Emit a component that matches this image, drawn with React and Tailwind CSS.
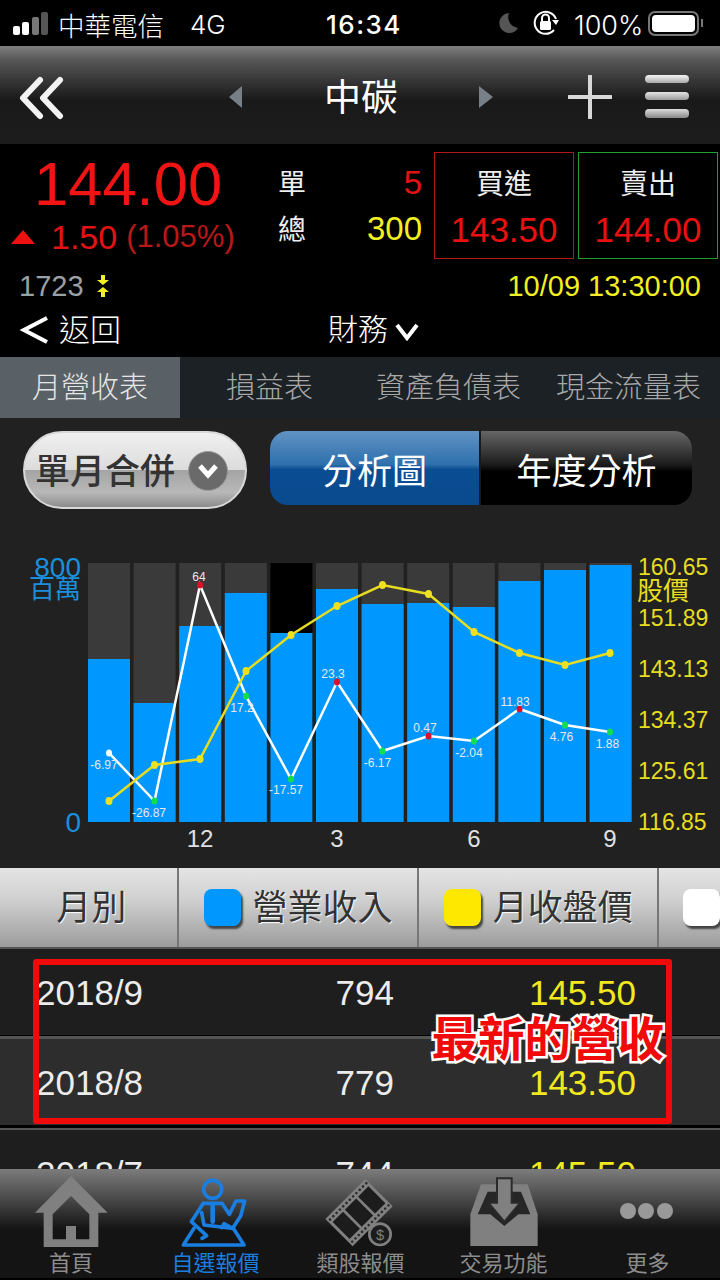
import React from 'react';

const barTops = [659, 703, 626, 593, 633, 589, 604, 603, 607, 581, 570, 565];
const pointX = [109, 154.5, 200, 246, 291, 337, 382.5, 428.5, 474, 519.5, 565, 610];
const priceY = [801, 765, 759, 671, 635, 606, 585, 594, 632, 653, 665, 653];
const growthY = [753, 801, 585, 696, 779, 682, 751, 736, 741, 709, 725, 732];
const growthDot = ['#ffffff', '#11e04a', '#e0102a', '#11e04a', '#11e04a', '#e0102a', '#11e04a', '#e0102a', '#11e04a', '#e0102a', '#11e04a', '#11e04a'];
const growthLabels = [
  ['-6.97', 104, 769], ['-26.87', 149, 817], ['64', 199, 581], ['17.2', 242, 712],
  ['-17.57', 286, 794], ['23.3', 333, 678], ['-6.17', 377.5, 767], ['0.47', 425, 732],
  ['-2.04', 469, 757], ['11.83', 515, 706], ['4.76', 561.5, 741], ['1.88', 607.5, 748],
];
const rightAxis = [['160.65', 575], ['151.89', 626], ['143.13', 677], ['134.37', 728], ['125.61', 779], ['116.85', 830]];

const line = (ys) => pointX.map((x, i) => `${x},${ys[i]}`).join(' ');

const StatusBar = () => (
  <div className="h-[46px] bg-black flex items-center text-white text-[26px] leading-none font-['Inter','Noto_Sans_CJK_TC',sans-serif]">
    <svg width="36" height="24" viewBox="0 0 36 24" className="ml-[13px] mt-[2px]">
      <rect x="0" y="14" width="7" height="9" rx="2" fill="#fff" />
      <rect x="9" y="10" width="7" height="13" rx="2" fill="#fff" />
      <rect x="19" y="5" width="7" height="18" rx="2" fill="#777" />
      <rect x="28" y="0" width="7" height="23" rx="2" fill="#555" />
    </svg>
    <span className="ml-[9px] mt-[4px] w-[132px] text-[26.5px] font-['Noto_Sans_CJK_TC',sans-serif] font-light">中華電信</span>
    <span className="w-[136px] mt-[4px] text-[26px] font-light">4G</span>
    <span className="w-[170px] mt-[4px] font-medium tracking-[1.5px]">16:34</span>
    <svg width="24" height="24" viewBox="0 0 24 24">
      <path d="M13 2 A10 10 0 1 0 22 17 A11 11 0 0 1 13 2 Z" fill="#555" />
    </svg>
    <svg width="28" height="28" viewBox="0 0 28 28" className="ml-[12px]">
      <path d="M22 21 A11 11 0 1 1 24 10" fill="none" stroke="#fff" strokeWidth="2" />
      <path d="M20 11 L27 11 L24 16 Z" fill="#fff" />
      <rect x="8" y="12" width="11" height="9" rx="1.5" fill="#fff" />
      <path d="M10 12 V9 A3.5 3.5 0 0 1 17 9 V12" fill="none" stroke="#fff" strokeWidth="2" />
    </svg>
    <span className="ml-[14px] mt-[4px] w-[74px] text-[27px] font-light">100%</span>
    <div className="w-[51px] h-[25px] rounded-[7px] border-2 border-[#777] p-[2px]">
      <div className="w-full h-full rounded-[4px] bg-white" />
    </div>
    <div className="ml-[2px] w-[2px] h-[8px] bg-[#777]" />
  </div>
);

const NavBar = () => (
  <div className="h-[100px] pt-[3px] bg-[linear-gradient(#7f7f7f,#555_15%,#191919_55%,#1d1d1d)] flex items-center relative border-b-2 border-black">
    <svg width="46" height="44" viewBox="0 0 46 44" className="ml-[18px] mt-[2px]">
      <path d="M22 4 L5 22 L22 40 M42 4 L25 22 L42 40" fill="none" stroke="#f2f2f2" strokeWidth="6" strokeLinecap="round" strokeLinejoin="round" />
    </svg>
    <svg width="14" height="22" viewBox="0 0 14 22" className="ml-[165px]">
      <path d="M13 0 V22 L0 11 Z" fill="#788087" />
    </svg>
    <span className="w-[236px] mt-[4px] text-center text-[37px] text-white leading-none">中碳</span>
    <svg width="14" height="22" viewBox="0 0 14 22">
      <path d="M0 0 V22 L14 11 Z" fill="#788087" />
    </svg>
    <svg width="44" height="44" viewBox="0 0 44 44" className="ml-[75px]">
      <path d="M22 1 V43 M1 22 H43" stroke="#d8d8d8" strokeWidth="4" strokeLinecap="round" />
    </svg>
    <div className="ml-[33px] flex flex-col gap-[9px]">
      <div className="w-[44px] h-[8px] rounded-[4px] bg-[linear-gradient(#f5f5f5,#aaa)]" />
      <div className="w-[44px] h-[8px] rounded-[4px] bg-[linear-gradient(#e5e5e5,#999)]" />
      <div className="w-[44px] h-[9px] rounded-[4px] bg-[linear-gradient(#ddd,#888)]" />
    </div>
  </div>
);

const QuoteBox = ({ title, price, border }) => (
  <div className={`w-[140px] h-[107px] border flex flex-col items-center ${border}`}>
    <span className="mt-[16px] text-[28px] leading-[32px] text-[#eee]">{title}</span>
    <span className="mt-[10px] text-[35px] leading-[38px] text-[#e81010]">{price}</span>
  </div>
);

const Quote = () => (
  <div className="h-[210px] bg-black">
    <div className="flex pt-[6px] h-[113px]">
      <div className="w-[278px]">
        <div className="pl-[34px] mt-[-2px] text-[61.5px] leading-[68px] text-[#f01414]">144.00</div>
        <div className="flex items-center mt-[-1px]">
          <svg width="24" height="14" viewBox="0 0 24 14" className="ml-[11px]">
            <path d="M12 0 L24 14 H0 Z" fill="#ee1111" />
          </svg>
          <span className="ml-[16px] text-[34px] leading-[40px] text-[#e01414]">1.50</span>
          <span className="ml-[9px] text-[31px] leading-[40px] text-[#b81818]">(1.05%)</span>
        </div>
      </div>
      <div className="w-[144px] flex flex-col text-[28px] leading-[46px] mt-[10px]">
        <div className="flex justify-between text-[#eee]"><span>單</span><span className="text-[#e01414] text-[33px] leading-[42px]">5</span></div>
        <div className="flex justify-between text-[#eee]"><span>總</span><span className="text-[#f2f020] text-[33px] leading-[42px]">300</span></div>
      </div>
      <div className="ml-[12px] flex gap-[4px]">
        <QuoteBox title="買進" price="143.50" border="border-[#b01818]" />
        <QuoteBox title="賣出" price="144.00" border="border-[#20a030]" />
      </div>
    </div>
    <div className="flex items-center h-[32px] mt-[11px] px-[19px]">
      <span className="text-[29px] text-[#99a0a6] leading-none">1723</span>
      <svg width="12" height="22" viewBox="0 0 12 22" className="ml-[13px]">
        <path d="M4 0 H8 V5 H12 L6 10 L0 5 H4 Z M6 12 L12 17 H8 V22 H4 V17 H0 Z" fill="#f2f020" />
      </svg>
      <span className="ml-auto text-[29px] text-[#f2f020] leading-none">10/09 13:30:00</span>
    </div>
    <div className="flex items-center h-[40px] mt-[8px]">
      <svg width="30" height="30" viewBox="0 0 30 30" className="ml-[20px]">
        <path d="M27 3 L4 15 L27 27" fill="none" stroke="#fff" strokeWidth="4" />
      </svg>
      <span className="ml-[9px] text-[31px] leading-none text-white font-light">返回</span>
      <span className="ml-[207px] text-[30px] leading-none text-white font-light">財務</span>
      <svg width="24" height="18" viewBox="0 0 24 18" className="ml-[7px] mt-[4px]">
        <path d="M2 2 L12 15 L22 2" fill="none" stroke="#fff" strokeWidth="4" />
      </svg>
    </div>
  </div>
);

const Tabs = () => (
  <div className="h-[61px] bg-[#1c2125] flex items-center text-[29px] text-[#a8a8a8] leading-none font-light">
    <div className="w-[180px] h-full pt-[2px] bg-[#5a6166] flex items-center justify-center text-[#e6e6e6]">月營收表</div>
    <div className="ml-[46px] pt-[2px] w-[150px]">損益表</div>
    <div className="w-[180px] pt-[2px]">資產負債表</div>
    <div className="pt-[2px]">現金流量表</div>
  </div>
);

const Controls = () => (
  <div className="flex items-start pl-[23px] pt-[13px] h-[127px]">
    <div className="w-[224px] h-[78px] pt-[2px] rounded-[39px] border-2 border-[#d8d8d8] bg-[linear-gradient(#f0f0f0,#dcdcdc_50%,#a4a4a4_50%,#b8b8b8_80%,#8c8c8c)] flex items-center pl-[10px]">
      <span className="text-[35px] leading-none font-medium text-[#333]">單月合併</span>
      <div className="ml-[13px] w-[40px] h-[40px] rounded-full bg-[#6a6a6a] border border-[#999] flex items-center justify-center">
        <svg width="22" height="16" viewBox="0 0 22 16">
          <path d="M3 3 L11 12 L19 3" fill="none" stroke="#fff" strokeWidth="5" />
        </svg>
      </div>
    </div>
    <div className="ml-[23px] w-[422px] h-[74px] rounded-[18px] overflow-hidden flex text-[35px] leading-none text-white">
      <div className="w-[209px] pt-[6px] bg-[linear-gradient(#6193c3,#2f70ad_45%,#0a4d92_52%,#0a4a8e)] flex items-center justify-center">分析圖</div>
      <div className="w-[2px] bg-[#1a1a1a]" />
      <div className="flex-1 pt-[6px] bg-[linear-gradient(#666,#1c1c1c_45%,#000_55%,#000)] flex items-center justify-center">年度分析</div>
    </div>
  </div>
);

const Chart = () => (
  <svg width="720" height="315" viewBox="0 545 720 315" className="block mb-[8px] font-['Liberation_Sans','Noto_Sans_CJK_TC',sans-serif]">
    {barTops.map((top, i) => (
      <g key={i}>
        <rect x={88 + i * 45.6} y="563" width="42" height="259" fill={i === 4 ? '#000000' : '#3a3a3a'} />
        <rect x={88 + i * 45.6} y={top} width="42" height={822 - top} fill="#0098ff" />
      </g>
    ))}
    <polyline points={line(growthY)} fill="none" stroke="#ffffff" strokeWidth="2.5" />
    <polyline points={line(priceY)} fill="none" stroke="#e6dc20" strokeWidth="2.5" />
    {pointX.map((x, i) => (
      <g key={i}>
        <ellipse cx={x} cy={growthY[i]} rx="3" ry="3.5" fill={growthDot[i]} />
        <ellipse cx={x} cy={priceY[i]} rx="3.5" ry="4" fill="#f0e020" />
      </g>
    ))}
    {growthLabels.map(([label, x, y]) => (
      <text key={label} x={x} y={y} fontSize="12" fill="#e8e8e8" textAnchor="middle">{label}</text>
    ))}
    <text x="81" y="577" fontSize="28" fill="#1a8fdc" textAnchor="end">800</text>
    <text x="81" y="598" fontSize="26" fill="#1a8fdc" textAnchor="end">百萬</text>
    <text x="81" y="832" fontSize="28" fill="#1a8fdc" textAnchor="end">0</text>
    {rightAxis.map(([label, y]) => (
      <text key={label} x="638" y={y} fontSize="23" fill="#e6dc20">{label}</text>
    ))}
    <text x="637" y="600" fontSize="26" fill="#e6dc20">股價</text>
    {[['12', 200], ['3', 337], ['6', 474], ['9', 610]].map(([label, x]) => (
      <text key={label} x={x} y="847" fontSize="24" fill="#e0e0e0" textAnchor="middle">{label}</text>
    ))}
  </svg>
);

const HeaderCell = ({ swatch, children, width }) => (
  <div className={`h-full bg-[linear-gradient(#e4e4e4,#d0d0d0_40%,#9c9c9c)] flex items-center justify-center gap-[12px] text-[#333] text-[35px] leading-none [text-shadow:1px_1px_1px_#fff] border-r-2 border-[#777] ${width}`}>
    {swatch && <div className={`w-[37px] h-[37px] rounded-[8px] shadow-[2px_3px_2px_#444] ${swatch}`} />}
    <span>{children}</span>
  </div>
);

const Row = ({ date, revenue, price, rowClass }) => (
  <div className={`flex items-center pl-[36px] text-[35px] leading-none ${rowClass}`}>
    <span className="w-[200px] text-[#ececec]">{date}</span>
    <span className="w-[158px] text-right text-[#ececec]">{revenue}</span>
    <span className="w-[242px] text-right text-[#f2e81e]">{price}</span>
  </div>
);

const Table = () => (
  <div className="relative">
    <div className="flex h-[81px] border-b-2 border-[#555]">
      <HeaderCell width="w-[179px] pl-[6px]">月別</HeaderCell>
      <HeaderCell width="w-[241px]" swatch="bg-[#0098ff]">營業收入</HeaderCell>
      <HeaderCell width="w-[240px]" swatch="bg-[#ffe800]">月收盤價</HeaderCell>
      <div className="flex-1 bg-[linear-gradient(#e4e4e4,#d0d0d0_40%,#9c9c9c)] flex items-center pl-[24px]">
        <div className="w-[37px] h-[37px] shrink-0 rounded-[8px] bg-white shadow-[2px_3px_2px_#444]" />
      </div>
    </div>
    <Row date="2018/9" revenue="794" price="145.50" rowClass="h-[86px] bg-[#1e1e1e]" />
    <div className="h-[4px] bg-[linear-gradient(#000_25%,#555_25%)]" />
    <Row date="2018/8" revenue="779" price="143.50" rowClass="h-[86px] bg-[#2d2d2d]" />
    <div className="h-[5px] bg-[linear-gradient(#000_50%,#555_50%)]" />
    <Row date="2018/7" revenue="744" price="145.50" rowClass="h-[86px] bg-[#1e1e1e]" />
    {/* annotation drawn over the first two rows */}
    <div className="absolute left-[33px] top-[91px] w-[639px] h-[165px] border-[6px] border-[#f00a0a] rounded-[3px]">
      <span className="absolute right-[2px] top-[52px] text-[46.5px] leading-none font-bold text-[#f00a0a] whitespace-nowrap [-webkit-text-stroke:5px_#fff] [paint-order:stroke_fill]">最新的營收</span>
    </div>
  </div>
);

const TabItem = ({ width, label, active, children }) => (
  <div className={`${width} flex flex-col items-center`}>
    <div className="h-[72px] mt-[6px]">{children}</div>
    <span className={`mt-[4px] text-[22px] leading-[26px] ${active ? 'text-[#1a7ee0]' : 'text-[#8c8c8c]'}`}>{label}</span>
  </div>
);

const TabBar = () => (
  <div className="h-[111px] shrink-0 bg-[linear-gradient(#7c7c7c,#444_30%,#141414_55%,#141414)] border-b-2 border-black flex">
    <TabItem width="w-[142px]" label="首頁">
      <svg width="80" height="72" viewBox="30 12 240 216">
        <path fillRule="evenodd" fill="#808080" d="M150 15 L260 125 H232 V228 H68 V125 H42 Z M150 75 L95 130 V205 H135 V165 H165 V205 H205 V130 Z" />
      </svg>
    </TabItem>
    <TabItem width="w-[147px]" label="自選報價" active>
      <svg width="80" height="72" viewBox="468 12 240 216" fill="none" stroke="#1a7ee0" strokeWidth="11" strokeLinejoin="round" strokeLinecap="round">
        <circle cx="578" cy="55" r="27" />
        <path d="M550 97 L606 97 L628 130 L648 90 L674 90 L662 135 L638 172 L612 158 L605 170" />
        <path d="M550 97 L514 152 L560 194 L546 202" />
        <path d="M545 125 L552 162 L640 172" />
        <path d="M578 100 V152" strokeWidth="14" />
        <path d="M522 172 L490 222 H672 L640 172" />
      </svg>
    </TabItem>
    <TabItem width="w-[143px]" label="類股報價">
      <svg width="80" height="72" viewBox="33 12 240 216">
        <g transform="translate(147 125) rotate(-45)">
          <rect x="-85" y="-58" width="170" height="116" fill="#808080" />
          <rect x="-76" y="-36" width="44" height="72" fill="#1c1c1c" />
          <rect x="-24" y="-36" width="48" height="72" fill="#1c1c1c" />
          <rect x="32" y="-36" width="44" height="72" fill="#1c1c1c" />
          {[-76, -62, -48, -34, -20, -6, 8, 22, 36, 50, 64, 78].map((x) => (
            <g key={x}>
              <circle cx={x} cy="-47" r="4" fill="#2a2a2a" />
              <circle cx={x} cy="47" r="4" fill="#2a2a2a" />
            </g>
          ))}
        </g>
        <circle cx="210" cy="190" r="32" fill="#1c1c1c" stroke="#808080" strokeWidth="8" />
        <text x="210" y="206" fontSize="44" fill="#808080" textAnchor="middle" fontFamily="Liberation Sans">$</text>
      </svg>
    </TabItem>
    <TabItem width="w-[143px]" label="交易功能">
      <svg width="80" height="72" viewBox="459 12 240 216">
        <path fill="#808080" d="M510 40 H650 L680 130 V225 H478 V130 Z" />
        <path fill="#262626" d="M530 62 H630 L658 130 H622 L580 165 L538 130 H500 Z" />
        <path fill="#808080" stroke="#2a2a2a" strokeWidth="6" d="M558 22 H602 V95 H628 L580 152 L532 95 H558 Z" />
      </svg>
    </TabItem>
    <TabItem width="w-[145px]" label="更多">
      <svg width="80" height="72" viewBox="0 0 80 72">
        <circle cx="20" cy="36" r="8" fill="#999" />
        <circle cx="38" cy="36" r="8" fill="#999" />
        <circle cx="57" cy="36" r="8" fill="#999" />
      </svg>
    </TabItem>
  </div>
);

const App = () => (
  <div className="w-[720px] h-[1280px] overflow-hidden bg-[#212121] flex flex-col font-['Liberation_Sans','Noto_Sans_CJK_TC',sans-serif]">
    <StatusBar />
    <NavBar />
    <Quote />
    <div className="h-[1px] bg-black" />
    <Tabs />
    <div className="flex-1 overflow-hidden">
      <Controls />
      <Chart />
      <Table />
    </div>
    <TabBar />
  </div>
);

export default App;
